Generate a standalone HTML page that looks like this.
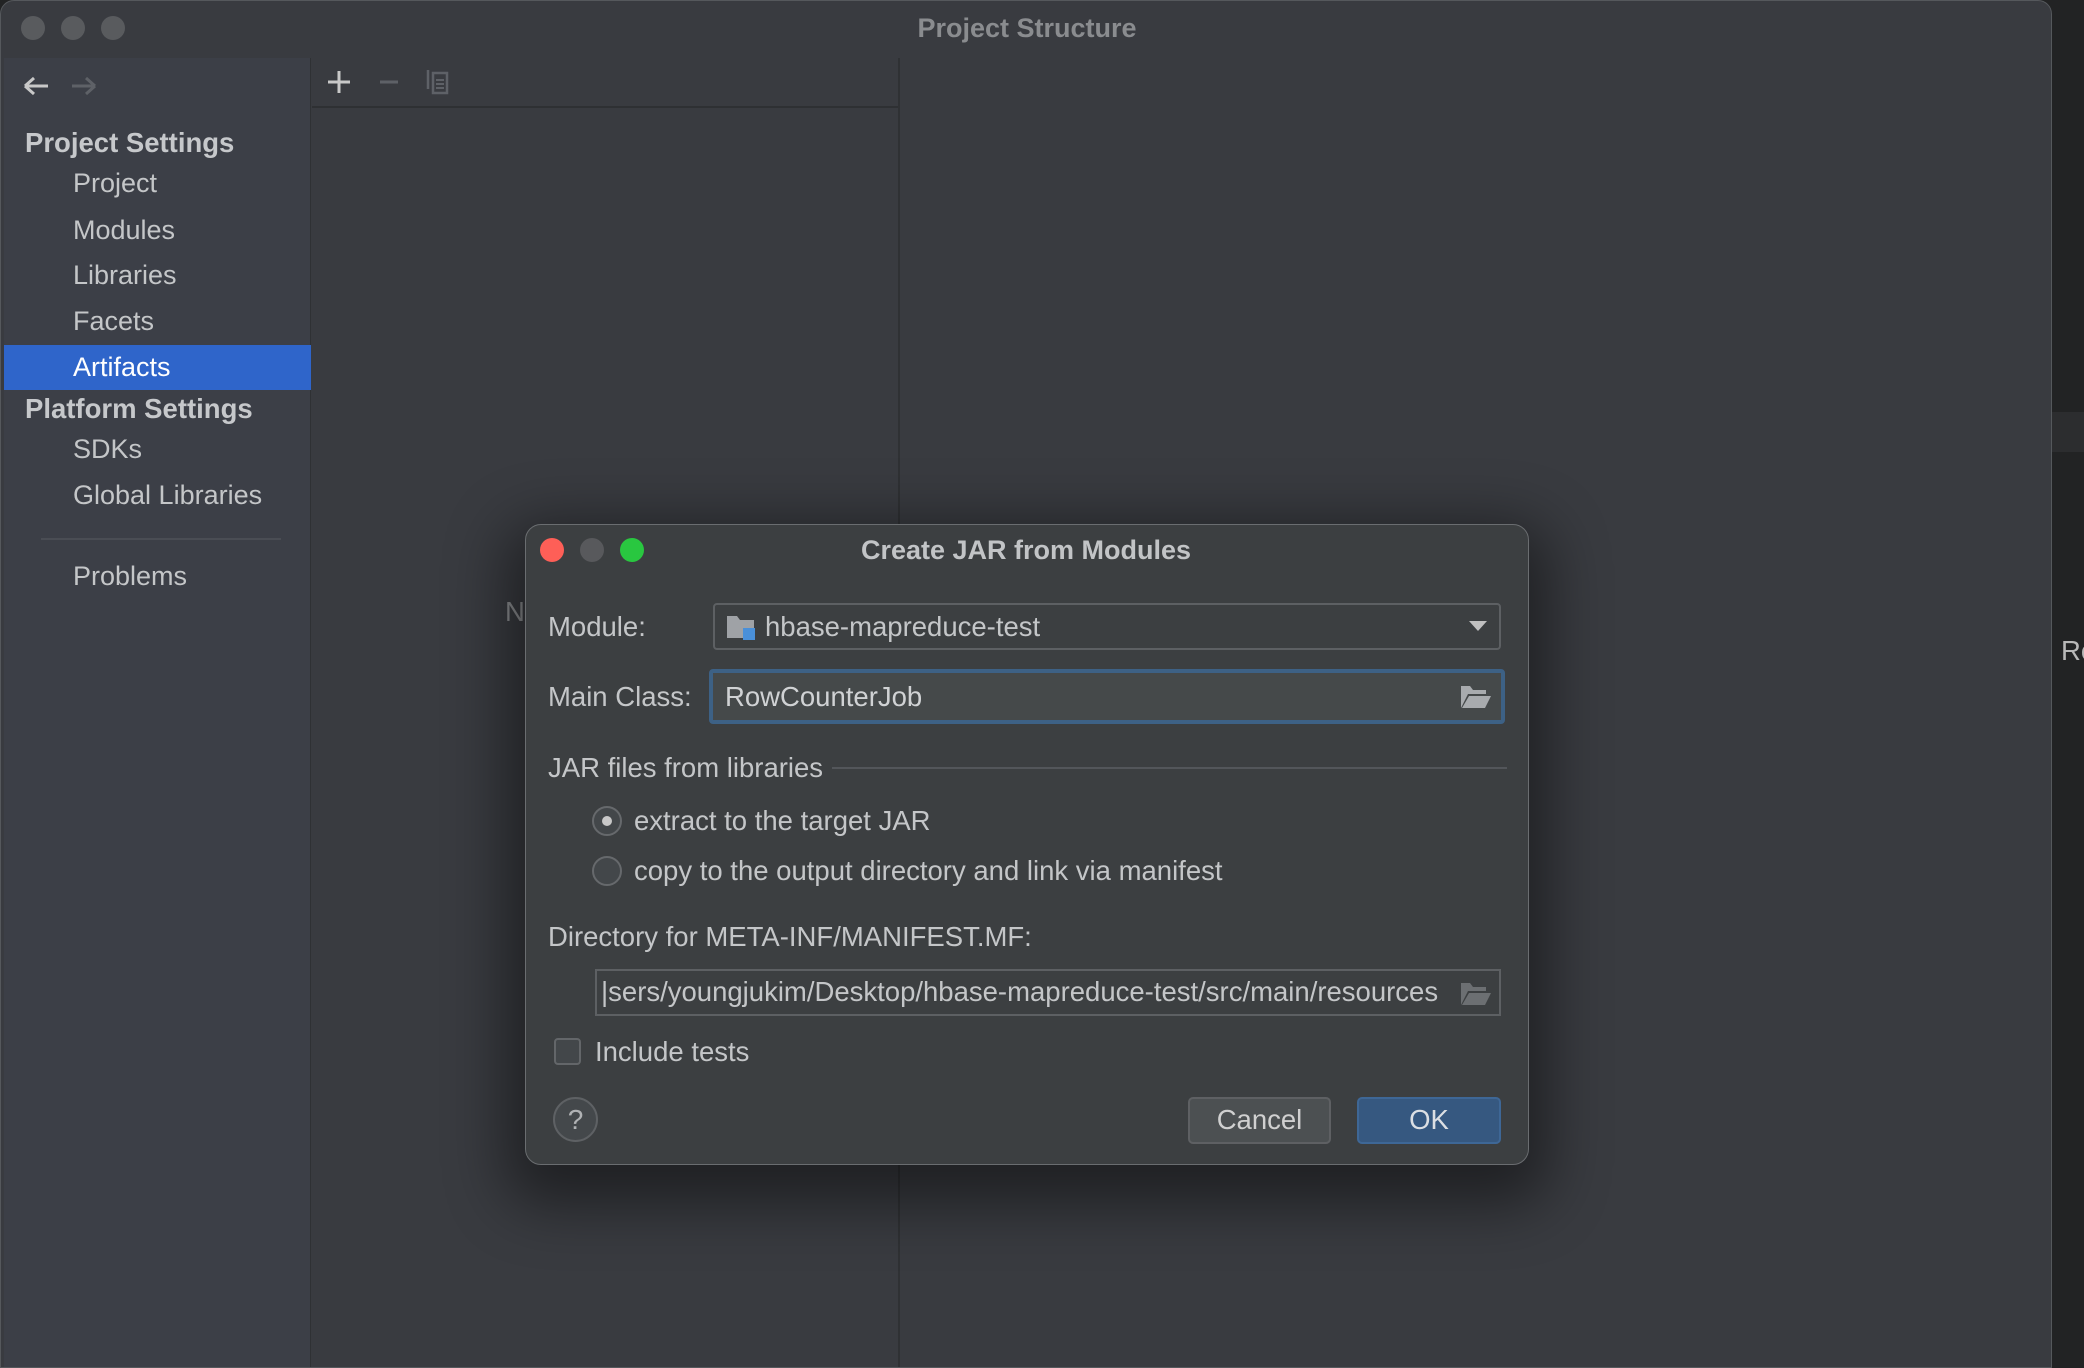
<!DOCTYPE html>
<html><head><meta charset="utf-8"><style>
*{margin:0;padding:0;box-sizing:border-box}
body{width:2084px;height:1368px;background:#222324;font-family:"Liberation Sans",sans-serif;position:relative;overflow:hidden;color:#c4c6c8}
.abs{position:absolute}
.win{left:0;top:0;width:2052px;height:1368px;background:#393b40;border-radius:14px 14px 0 0;border:1px solid #55585c;overflow:hidden}
.t{position:absolute;font-size:27.5px;white-space:nowrap;line-height:30px}
.s{font-size:27px}
.dot{position:absolute;width:24px;height:24px;border-radius:50%}
</style></head><body>
<div class="abs" style="left:2052px;top:412px;width:32px;height:40px;background:#2c2d2f"></div>
<div class="t" style="left:2061px;top:636px;color:#b8b8b8">Re</div>

<div class="abs win">
  <div class="dot" style="left:20px;top:15px;background:#595b5e"></div>
  <div class="dot" style="left:60px;top:15px;background:#595b5e"></div>
  <div class="dot" style="left:100px;top:15px;background:#595b5e"></div>
  <div class="t" style="left:0;width:2052px;text-align:center;top:12px;font-weight:bold;color:#8a8c8f;font-size:27px">Project Structure</div>
  <div class="abs" style="left:3px;top:57px;width:307px;height:1320px;background:#3c3f47;border-right:1px solid #2f3134"></div>
  <svg class="abs" style="left:20px;top:72px" width="80" height="26"><path d="M4 13H27M4 13L13 5M4 13L13 21" stroke="#c8c8c8" stroke-width="3" fill="none"/><path d="M57 13H80M80 13L71 5M80 13L71 21" stroke="#5e6167" stroke-width="3" fill="none" transform="translate(-6,0)"/></svg>
  <div class="t" style="left:24px;top:127px;font-weight:bold;font-size:27.5px;color:#c6c8cb">Project Settings</div>
  <div class="t s" style="left:72px;top:167px">Project</div>
  <div class="t s" style="left:72px;top:214px">Modules</div>
  <div class="t s" style="left:72px;top:259px">Libraries</div>
  <div class="t s" style="left:72px;top:305px">Facets</div>
  <div class="abs" style="left:3px;top:344px;width:307px;height:45px;background:#2f65ca"></div>
  <div class="t s" style="left:72px;top:351px;color:#fff">Artifacts</div>
  <div class="t" style="left:24px;top:393px;font-weight:bold;font-size:27.5px;color:#c6c8cb">Platform Settings</div>
  <div class="t s" style="left:72px;top:433px">SDKs</div>
  <div class="t s" style="left:72px;top:479px">Global Libraries</div>
  <div class="abs" style="left:40px;top:537px;width:240px;height:2px;background:#4a4d54"></div>
  <div class="t s" style="left:72px;top:560px">Problems</div>
  <svg class="abs" style="left:326px;top:68px" width="130" height="28"><path d="M12 2V24M1 13H23" stroke="#c8c8c8" stroke-width="3"/><path d="M53 13H71" stroke="#5e6167" stroke-width="3"/><rect x="106" y="4" width="14" height="20" fill="none" stroke="#5e6167" stroke-width="2.5"/><path d="M101 1V20" stroke="#5e6167" stroke-width="2.5"/><path d="M109 11H117M109 15H117M109 19H117" stroke="#5e6167" stroke-width="2"/></svg>
  <div class="abs" style="left:311px;top:105px;width:586px;height:2px;background:#2e3033"></div>
  <div class="abs" style="left:897px;top:57px;width:2px;height:1320px;background:#2f3134"></div>
  <div class="t" style="left:504px;top:596px;color:#8a8c8f">N</div>
</div>

<div class="abs" style="left:525px;top:524px;width:1004px;height:641px;background:#3c3f41;border:1.5px solid #6a6d70;border-radius:16px;box-shadow:0 20px 60px 20px rgba(0,0,0,0.45)">
  <div class="dot" style="left:14px;top:13px;background:#fe5f57"></div>
  <div class="dot" style="left:54px;top:13px;background:#58595c"></div>
  <div class="dot" style="left:94px;top:13px;background:#29c740"></div>
  <div class="t" style="left:0;width:1000px;text-align:center;top:10px;font-weight:bold;color:#c2c4c6;font-size:27px">Create JAR from Modules</div>

  <div class="t" style="left:22px;top:87px">Module:</div>
  <div class="abs" style="left:187px;top:78px;width:788px;height:47px;border:2px solid #5d6063;border-radius:4px;background:#3c3f41"></div>
  <svg class="abs" style="left:200px;top:88px" width="32" height="28"><path d="M1 3H11L14 7H28V25H1Z" fill="#9fa2a6"/><rect x="17" y="15" width="12" height="12" fill="#4a90d9"/></svg>
  <div class="t" style="left:239px;top:87px">hbase-mapreduce-test</div>
  <svg class="abs" style="left:942px;top:94px" width="20" height="14"><path d="M1 2H19L10 12Z" fill="#c0c0c0"/></svg>

  <div class="t" style="left:22px;top:157px">Main Class:</div>
  <div class="abs" style="left:183px;top:144px;width:796px;height:55px;border:4px solid #3d6185;border-radius:4px;background:#45494a"></div>
  <div class="t" style="left:199px;top:157px;color:#d0d2d4">RowCounterJob</div>
  <svg class="abs" style="left:934px;top:159px" width="32" height="26"><path d="M1 2H10L13 6H26V10H8L1 24Z" fill="#a8abae"/><path d="M9 12H31L25 24H2Z" fill="#a8abae"/></svg>

  <div class="t" style="left:22px;top:228px">JAR files from libraries</div>
  <div class="abs" style="left:306px;top:242px;width:675px;height:2px;background:#53565a"></div>

  <div class="abs" style="left:66px;top:281px;width:30px;height:30px;border-radius:50%;border:2px solid #66696c;background:#43474a"></div>
  <div class="abs" style="left:76px;top:291px;width:10px;height:10px;border-radius:50%;background:#c8c8c8"></div>
  <div class="t" style="left:108px;top:281px">extract to the target JAR</div>
  <div class="abs" style="left:66px;top:331px;width:30px;height:30px;border-radius:50%;border:2px solid #66696c;background:#43474a"></div>
  <div class="t" style="left:108px;top:331px">copy to the output directory and link via manifest</div>

  <div class="t" style="left:22px;top:397px">Directory for META-INF/MANIFEST.MF:</div>
  <div class="abs" style="left:69px;top:444px;width:906px;height:47px;border:2px solid #5d6063;background:#3c3f41;overflow:hidden">
    <div class="t" style="left:4px;top:6px;color:#c4c6c8">|sers/youngjukim/Desktop/hbase-mapreduce-test/src/main/resources</div>
    <div class="abs" style="right:0;top:0;width:50px;height:45px;background:#3c3f41"></div>
  </div>
  <svg class="abs" style="left:934px;top:456px" width="32" height="26"><path d="M1 2H10L13 6H26V10H8L1 24Z" fill="#6c6f72"/><path d="M9 12H31L25 24H2Z" fill="#6c6f72"/></svg>

  <div class="abs" style="left:28px;top:513px;width:27px;height:27px;border:2px solid #636669;border-radius:4px;background:#43474a"></div>
  <div class="t" style="left:69px;top:512px">Include tests</div>

  <div class="abs" style="left:27px;top:572px;width:45px;height:45px;border-radius:50%;border:2px solid #5e6164;background:#44484b"></div>
  <div class="t" style="left:27px;top:580px;width:45px;text-align:center;color:#b0b2b4;font-size:28px">?</div>

  <div class="abs" style="left:662px;top:572px;width:143px;height:47px;border:2px solid #5e6063;border-radius:5px;background:#4c5052"></div>
  <div class="t" style="left:662px;top:580px;width:143px;text-align:center;color:#d0d0d0">Cancel</div>
  <div class="abs" style="left:831px;top:572px;width:144px;height:47px;border-radius:5px;background:#365880;border:2px solid #3e6796"></div>
  <div class="t" style="left:831px;top:580px;width:144px;text-align:center;color:#dcdfe3">OK</div>
</div>
</body></html>
